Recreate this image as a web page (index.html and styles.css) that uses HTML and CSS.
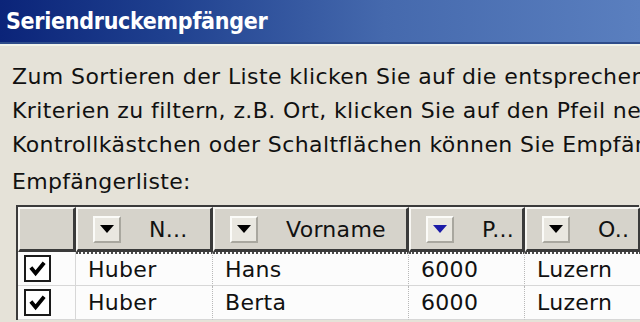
FILE: index.html
```html
<!DOCTYPE html>
<html lang="de">
<head>
    <meta charset="UTF-8">
    <title>Seriendruckempfänger</title>
    <link rel="stylesheet" href="styles.css">
</head>
<body>
    <div class="titlebar">Seriendruckempfänger</div>
    <div class="dialog">
        <p class="intro">
            <span>Zum Sortieren der Liste klicken Sie auf die entsprechende</span>
            <span>Kriterien zu filtern, z.B. Ort, klicken Sie auf den Pfeil neben</span>
            <span>Kontrollkästchen oder Schaltflächen können Sie Empfänger</span>
        </p>
        <div class="list-label">Empfängerliste:</div>

        <div class="grid">
            <div class="head blank"></div>
            <div class="head"><span class="drop"><i></i></span><span class="label">N...</span></div>
            <div class="head"><span class="drop"><i></i></span><span class="label">Vorname</span></div>
            <div class="head"><span class="drop active"><i></i></span><span class="label">P...</span></div>
            <div class="head"><span class="drop"><i></i></span><span class="label">O..</span></div>

            <div class="cell check"><span class="box"><svg viewBox="0 0 20 20"><path d="M3 9 L8 15 L17 4" /></svg></span></div>
            <div class="cell focus">Huber</div>
            <div class="cell focus">Hans</div>
            <div class="cell focus">6000</div>
            <div class="cell focus">Luzern</div>

            <div class="cell check"><span class="box"><svg viewBox="0 0 20 20"><path d="M3 9 L8 15 L17 4" /></svg></span></div>
            <div class="cell">Huber</div>
            <div class="cell">Berta</div>
            <div class="cell">6000</div>
            <div class="cell">Luzern</div>
        </div>
    </div>
</body>
</html>
```

FILE: styles.css
```css
* {
    box-sizing: border-box;
}
body, html {
    margin: 0;
    height: 100%;
    overflow: hidden;
    background-color: #e5e2d8;
    font-family: 'DejaVu Sans', sans-serif;
    color: #111;
}
.titlebar {
    height: 44px;
    padding: 3px 0 0 6px;
    background: linear-gradient(to right, #0b2479 0%, #1e3f8e 25%, #4569ad 60%, #5a7fbf 100%);
    border-bottom: 2px solid #2e4c8a;
    color: #fff;
    font-family: 'DejaVu Sans Condensed', sans-serif;
    font-weight: bold;
    font-size: 23px;
    letter-spacing: -0.3px;
    line-height: 36px;
    box-shadow: 0 2px 0 #f1f3ea;
}
.dialog {
    padding: 0 0 0 12px;
}
.intro {
    margin: 16px 0 0;
    font-size: 22px;
    line-height: 34px;
    letter-spacing: 0.4px;
    white-space: nowrap;
}
.intro span {
    display: block;
}
.list-label {
    margin-top: 3px;
    font-size: 22px;
    line-height: 34px;
    letter-spacing: 0.3px;
}
.grid {
    display: grid;
    grid-template-columns: 58px 137px 196px 116px 116px;
    grid-template-rows: 45px 34px 34px;
    margin: 6px 0 0 4px;
    width: 623px;
    border-top: 2px solid #3b3b3b;
    border-left: 2px solid #3b3b3b;
    font-size: 22px;
    letter-spacing: 0.3px;
}
.head {
    display: flex;
    align-items: center;
    gap: 28px;
    padding-left: 15px;
    background-color: #d6d3cb;
    border-top: 2px solid #f7f6f2;
    border-left: 2px solid #f7f6f2;
    border-right: 3px solid #3a3a3a;
    border-bottom: 3px solid #3a3a3a;
}
.head.blank {
    padding: 0;
}
.drop {
    width: 28px;
    height: 27px;
    display: flex;
    align-items: center;
    justify-content: center;
    background-color: #e9e7e0;
    border-top: 2px solid #fbfbf8;
    border-left: 2px solid #fbfbf8;
    border-right: 2px solid #a9a79f;
    border-bottom: 2px solid #a9a79f;
}
.drop i {
    width: 0;
    height: 0;
    border-left: 7px solid transparent;
    border-right: 7px solid transparent;
    border-top: 8px solid #000;
}
.drop.active i {
    border-top-color: #1c1ca8;
}
.label {
    white-space: nowrap;
}
.cell {
    display: flex;
    align-items: center;
    padding-left: 12px;
    background-color: #fcfcfc;
    border-right: 1px dotted #b8b8b8;
    border-bottom: 1px solid #d7d7d7;
    white-space: nowrap;
    overflow: hidden;
}
.cell.focus {
    border-top: 2px dotted #4a4a4a;
}
.cell.check {
    padding-left: 6px;
    border-right: 1px solid #d7d7d7;
}
.box {
    width: 27px;
    height: 27px;
    border: 2px solid #1a1a1a;
    background-color: #fff;
    display: flex;
    align-items: center;
    justify-content: center;
}
.box svg {
    width: 19px;
    height: 19px;
    fill: none;
    stroke: #000;
    stroke-width: 4;
}
```
